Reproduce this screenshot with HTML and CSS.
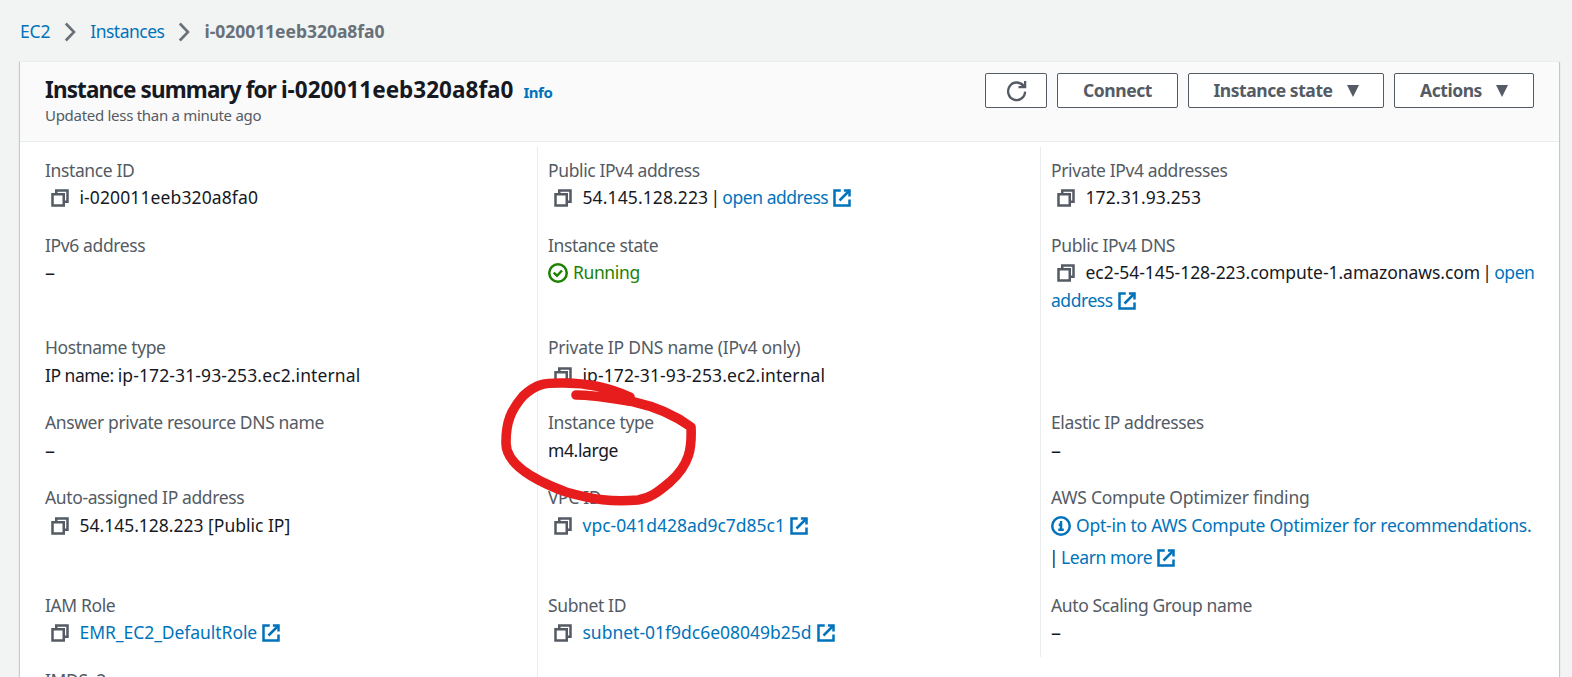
FILE: index.html
```html
<!DOCTYPE html>
<html lang="en">
<head>
<meta charset="utf-8">
<title>Instance details</title>
<link rel="stylesheet" href="styles.css">
</head>
<body>
<svg class="defs" width="0" height="0" aria-hidden="true">
  <symbol id="copy" viewBox="0 0 16 16"><path d="M2 5h9v9H2z"/><path d="M5 5V2h9v9h-3"/></symbol>
  <symbol id="ext" viewBox="0 0 16 16"><path d="M9.5 2H14v4.8"/><path d="M6 10l8-8"/><path d="M14 9.2V14H2V2h5"/></symbol>
  <symbol id="check" viewBox="0 0 16 16"><circle cx="8" cy="8" r="7"/><path d="M4.6 7.7l2.6 2.5 4-4.2"/></symbol>
  <symbol id="info" viewBox="0 0 16 16"><circle cx="8" cy="8" r="7"/><path d="M8 11.6V7H6.2M5.8 11h4.4M7.1 4.9h1.9"/></symbol>
</svg>
<nav class="crumbs">
  <a class="c1">EC2</a>
  <svg class="chev" viewBox="0 0 12 20"><path d="M1.8 1.5L10 10l-8.200 8.500"/></svg>
  <a class="c2">Instances</a>
  <svg class="chev" viewBox="0 0 12 20"><path d="M1.8 1.5L10 10l-8.200 8.500"/></svg>
  <span class="current">i-020011eeb320a8fa0</span>
</nav>
<main class="panel">
  <header class="head">
    <div class="titles">
      <h1><span class="title">Instance summary for <span class="title-id">i-020011eeb320a8fa0</span></span><a class="info">Info</a></h1>
      <p class="updated">Updated less than a minute ago</p>
    </div>
    <div class="actions">
      <button class="btn refresh" aria-label="Refresh"><svg viewBox="0 0 20 20"><path d="M18.600 10.600A8.500 8.800 0 1 1 16.800 4.900"/><path d="M18.600 0v6.200h-6.600M18.600 6.200l-4-4"/></svg></button>
      <button class="btn connect">Connect</button>
      <button class="btn state">Instance state<i class="caret"></i></button>
      <button class="btn more">Actions<i class="caret"></i></button>
    </div>
  </header>
  <div class="cols">
    <section class="col">
      <div class="item"><div class="label">Instance ID</div><div class="data id"><svg class="copy"><use href="#copy"/></svg>i-020011eeb320a8fa0</div></div>
      <div class="item"><div class="label">IPv6 address</div><div class="dash">–</div></div>
      <div class="item"><div class="label">Hostname type</div><div class="data id"><span class="tight">IP name: </span>ip-172-31-93-253.ec2.internal</div></div>
      <div class="item"><div class="label">Answer private resource DNS name</div><div class="dash">–</div></div>
      <div class="item"><div class="label">Auto-assigned IP address</div><div class="data"><svg class="copy"><use href="#copy"/></svg>54.145.128.223 [Public IP]</div></div>
      <div class="item"><div class="label">IAM Role</div><div class="data role"><svg class="copy"><use href="#copy"/></svg><a>EMR_EC2_DefaultRole<svg class="ext"><use href="#ext"/></svg></a></div></div>
      <div class="item"><div class="label">IMDSv2</div></div>
    </section>
    <section class="col ruled">
      <div class="item"><div class="label">Public IPv4 address</div><div><svg class="copy"><use href="#copy"/></svg><span class="data id">54.145.128.223</span> <span class="bar">|</span> <a class="link">open address<svg class="ext"><use href="#ext"/></svg></a></div></div>
      <div class="item"><div class="label">Instance state</div><div class="ok"><svg class="status"><use href="#check"/></svg>Running</div></div>
      <div class="item"><div class="label wide">Private IP DNS name (IPv4 only)</div><div class="data id"><svg class="copy"><use href="#copy"/></svg>ip-172-31-93-253.ec2.internal</div></div>
      <div class="item"><div class="label">Instance type</div><div>m4.large</div></div>
      <div class="item"><div class="label">VPC ID</div><div class="data"><svg class="copy"><use href="#copy"/></svg><a>vpc-041d428ad9c7d85c1<svg class="ext"><use href="#ext"/></svg></a></div></div>
      <div class="item"><div class="label">Subnet ID</div><div class="data"><svg class="copy"><use href="#copy"/></svg><a>subnet-01f9dc6e08049b25d<svg class="ext"><use href="#ext"/></svg></a></div></div>
      <div class="item"></div>
    </section>
    <section class="col ruled short">
      <div class="item"><div class="label">Private IPv4 addresses</div><div class="data id"><svg class="copy"><use href="#copy"/></svg>172.31.93.253</div></div>
      <div class="item"><div class="label">Public IPv4 DNS</div><div><svg class="copy"><use href="#copy"/></svg><span class="data host">ec2-54-145-128-223.compute-1.amazonaws.com</span> <span class="bar">|</span> <a class="link">open<br>address<svg class="ext"><use href="#ext"/></svg></a></div></div>
      <div class="item"></div>
      <div class="item"><div class="label">Elastic IP addresses</div><div class="dash">–</div></div>
      <div class="item"><div class="label wide">AWS Compute Optimizer finding</div><div class="optin"><a><svg class="status"><use href="#info"/></svg>Opt-in to AWS Compute Optimizer for recommendations.</a></div><div class="learn"><span class="bar">|</span> <a>Learn more<svg class="ext"><use href="#ext"/></svg></a></div></div>
      <div class="item"><div class="label">Auto Scaling Group name</div><div class="dash">–</div></div>
    </section>
  </div>
</main>
<svg class="marker" viewBox="0 0 200 130" aria-hidden="true"><path d="M76 15C95 15 115 19 134 22C157 27 176 36 191 47C192 68 190 84 170 102C157 113 150 118 138 120C112 122 94 120 66 112C36 101 5 85 6 62C6 42 11 30 23 16C38 2 47 3 64 3C86 3 108 7 130 17"/></svg>
</body>
</html>
```
FILE: styles.css
```css
* { box-sizing: border-box; }
html, body { height: 677px; overflow: hidden; }
body {
  margin: 0;
  background: #f2f3f3;
  color: #16191f;
  font: 17.5px/27.5px "Noto Sans", "Open Sans", sans-serif;
  letter-spacing: -0.38px;
  white-space: nowrap;
}
a { color: #0073bb; }
svg { fill: none; stroke: currentColor; stroke-width: 2; }
.defs { position: absolute; }

.crumbs { display: flex; align-items: center; height: 61px; padding: 3px 20px 0; }
.chev { width: 12px; height: 20px; margin: 0 14px; color: #687078; stroke-width: 2.6; }
.c1 { letter-spacing: -0.2px; }
.c2 { letter-spacing: -0.5px; }
.current { color: #687078; font-weight: 700; letter-spacing: -0.03px; }

.panel {
  width: 1539px;
  height: 616px;
  margin-left: 20px;
  overflow: hidden;
  background: #fff;
  border-top: 1px solid #eaeded;
  box-shadow: 0 1px 1px rgba(0, 28, 36, .3), 1px 1px 1px rgba(0, 28, 36, .15), -1px 1px 1px rgba(0, 28, 36, .15);
}
.head {
  display: flex;
  justify-content: space-between;
  height: 80px;
  padding: 11px 25px 0 25px;
  background: #fafafa;
  border-bottom: 1px solid #eaeded;
}
h1 { display: flex; align-items: baseline; gap: 10px; margin: 3px 0 0; font-size: 22.5px; line-height: 28px; letter-spacing: -0.87px; }
.title-id { letter-spacing: 0.02px; }
.info { font-size: 15px; letter-spacing: -0.5px; }
.updated { margin: -2px 0 0; color: #545b64; font-size: 15px; line-height: 22px; letter-spacing: -0.29px; }

.actions { display: flex; gap: 10px; }
.btn {
  display: flex;
  align-items: center;
  justify-content: center;
  height: 35px;
  padding: 0;
  background: #fff;
  border: 1px solid #545b64;
  border-radius: 2px;
  color: #545b64;
  font: 700 17.5px/27px "Noto Sans", "Open Sans", sans-serif;
  letter-spacing: -0.45px;
}
.refresh { width: 62px; }
.refresh svg { width: 21px; height: 20px; stroke-width: 2.3; overflow: visible; }
.connect { width: 121px; }
.state { width: 196px; }
.more { width: 140px; }
.caret { margin-left: 14px; border: 6.5px solid transparent; border-top: 12px solid #545b64; border-bottom: 0; }

.cols { display: grid; grid-template-columns: 517px 503px 519px; padding-top: 5px; }
.col {
  display: grid;
  grid-template-rows: 55px 82.5px 55px 55px 87.5px 55px 55px;
  row-gap: 20px;
  padding: 9.7px 0 10px 25px;
}
.ruled { padding-left: 10px; border-left: 1px solid #eaeded; }
.short { grid-template-rows: 55px 82.5px 55px 55px 87.5px 55px; align-self: start; }
.label { color: #545b64; }
.label.wide { letter-spacing: -0.24px; }
.data { letter-spacing: -0.01px; }
.id { letter-spacing: 0.11px; }
.tight { letter-spacing: -0.5px; }
.host { letter-spacing: -0.05px; }
.role { letter-spacing: -0.06px; }
.optin { letter-spacing: -0.25px; }
.link { letter-spacing: -0.46px; }
.bar { margin: 0 -1.5px 0 -2px; }
.dash { font-size: 20px; }
.ok { color: #1d8102; }
.learn { padding-top: 5px; }

.copy, .ext, .status { width: 20px; height: 20px; vertical-align: -4px; }
.copy { margin: 0 9.5px 0 5px; color: #545b64; }
.ext { margin-left: 4px; }
.status { margin-right: 5px; }

.marker { position: absolute; left: 500px; top: 380px; width: 200px; height: 130px; color: #e71d1d; stroke-width: 9.6; stroke-linecap: round; stroke-linejoin: round; overflow: visible; }
```
